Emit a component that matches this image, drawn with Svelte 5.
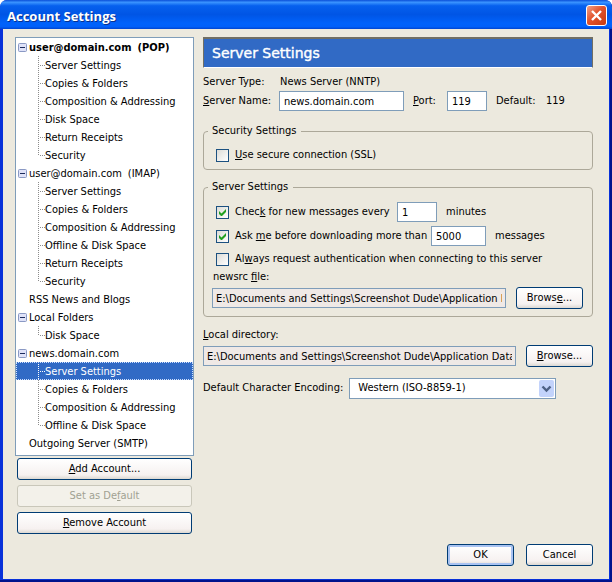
<script>
	const common = ['Copies & Folders', 'Composition & Addressing'];

	const accounts = [
		{
			name: 'user@domain.com',
			type: '(POP)',
			isDefault: true,
			pages: ['Server Settings', ...common, 'Disk Space', 'Return Receipts', 'Security']
		},
		{
			name: 'user@domain.com',
			type: '(IMAP)',
			pages: ['Server Settings', ...common, 'Offline & Disk Space', 'Return Receipts', 'Security']
		},
		{ name: 'RSS News and Blogs', pages: [] },
		{ name: 'Local Folders', pages: ['Disk Space'] },
		{ name: 'news.domain.com', pages: ['Server Settings', ...common, 'Offline & Disk Space'] },
		{ name: 'Outgoing Server (SMTP)', pages: [] }
	];

	let selected = $state('4-0');
	let collapsed = $state({});

	let serverName = $state('news.domain.com');
	let port = $state('119');
	let useSsl = $state(false);
	let checkNew = $state(true);
	let checkMinutes = $state('1');
	let askBefore = $state(true);
	let maxMessages = $state('5000');
	let alwaysAuth = $state(false);
	let encoding = $state('Western (ISO-8859-1)');

	const newsrcFile = 'E:\\Documents and Settings\\Screenshot Dude\\Application Data\\Thunderbird';
	const localDirectory = 'E:\\Documents and Settings\\Screenshot Dude\\Application Data\\Thunderbird';
</script>

{#snippet tick(on)}
	<svg class="tick" class:on viewBox="0 0 13 13" aria-hidden="true">
		<path d="M3 5v3l2 2h1l4-4V3L5.500 7.500z" fill="#21a121" />
	</svg>
{/snippet}

<div class="window">
	<header class="titlebar">
		<h1>Account Settings</h1>
		<button class="close" aria-label="Close">
			<svg viewBox="0 0 19 19" aria-hidden="true">
				<path d="M5 5l9 9M14 5l-9 9" stroke="#fff" stroke-width="2.4" />
			</svg>
		</button>
	</header>

	<div class="body">
		<div class="columns">
			<aside>
				<ul class="tree">
					{#each accounts as account, i}
						<li>
							<div class="row">
								{#if account.pages.length}
									<button
										class="twisty"
										aria-label="Toggle {account.name}"
										onclick={() => (collapsed[i] = !collapsed[i])}
									>
										<svg viewBox="0 0 9 9" aria-hidden="true">
											<rect x="0.5" y="0.5" width="8" height="8" rx="1" fill="#dfe2f8" stroke="#8a99c4" />
											<path d={collapsed[i] ? 'M2 4.500h5M4.500 2v5' : 'M2 4.500h5'} stroke="#1b2a5c" />
										</svg>
									</button>
								{:else}
									<span class="twisty"></span>
								{/if}
								<button
									class="item"
									class:bold={account.isDefault}
									onclick={() => (selected = `${i}`)}
								>
									<span>{account.name}</span>
									{#if account.type}<span>{account.type}</span>{/if}
								</button>
							</div>
							{#if account.pages.length && !collapsed[i]}
								<ul>
									{#each account.pages as page, j}
										<li>
											<button
												class="page"
												class:selected={selected === `${i}-${j}`}
												onclick={() => (selected = `${i}-${j}`)}
											>
												<svg class="guide" viewBox="0 0 7 18" aria-hidden="true">
													<path
														d={j === account.pages.length - 1 ? 'M0.500 0v10' : 'M0.500 0v18'}
														stroke-dasharray="1 1"
													/>
													<path d="M2 9.500h5" stroke-dasharray="1 1" />
												</svg>
												<span class="page-name">{page}</span>
											</button>
										</li>
									{/each}
								</ul>
							{/if}
						</li>
					{/each}
				</ul>
				<div class="account-buttons">
					<button class="btn"><u>A</u>dd Account...</button>
					<button class="btn" disabled>Set as De<u>f</u>ault</button>
					<button class="btn"><u>R</u>emove Account</button>
				</div>
			</aside>

			<main>
				<h2>Server Settings</h2>

				<div class="info">
					<span class="name">Server Type:</span>
					<span>News Server (NNTP)</span>
				</div>
				<div class="line server">
					<label class="name" for="server-name"><u>S</u>erver Name:</label>
					<input id="server-name" class="text host" type="text" bind:value={serverName} />
					<label class="port-label" for="port"><u>P</u>ort:</label>
					<input id="port" class="text short" type="text" bind:value={port} />
					<span class="default-label">Default:</span>
					<span>119</span>
				</div>

				<fieldset class="security">
					<legend>Security Settings</legend>
					<div class="line">
						<label class="check">
							<span class="box"><input type="checkbox" bind:checked={useSsl} />{@render tick(useSsl)}</span>
							<span><u>U</u>se secure connection (SSL)</span>
						</label>
					</div>
				</fieldset>

				<fieldset class="server-settings">
					<legend>Server Settings</legend>
					<div class="line">
						<label class="check">
							<span class="box"><input type="checkbox" bind:checked={checkNew} />{@render tick(checkNew)}</span>
							<span class="minutes-label">Chec<u>k</u> for new messages every</span>
						</label>
						<input class="text short" type="text" aria-label="Minutes" bind:value={checkMinutes} />
						<span class="unit">minutes</span>
					</div>
					<div class="line">
						<label class="check">
							<span class="box"><input type="checkbox" bind:checked={askBefore} />{@render tick(askBefore)}</span>
							<span class="messages-label">Ask <u>m</u>e before downloading more than</span>
						</label>
						<input class="text medium" type="text" aria-label="Messages" bind:value={maxMessages} />
						<span class="unit">messages</span>
					</div>
					<div class="line auth">
						<label class="check">
							<span class="box"><input type="checkbox" bind:checked={alwaysAuth} />{@render tick(alwaysAuth)}</span>
							<span>Al<u>w</u>ays request authentication when connecting to this server</span>
						</label>
					</div>
					<label class="path-label" for="newsrc">newsrc <u>f</u>ile:</label>
					<div class="path">
						<input id="newsrc" class="text" type="text" readonly value={newsrcFile} />
						<button class="btn small">Brows<u>e</u>...</button>
					</div>
				</fieldset>

				<label class="dir-label" for="local-dir"><u>L</u>ocal directory:</label>
				<div class="path">
					<input id="local-dir" class="text" type="text" readonly value={localDirectory} />
					<button class="btn small"><u>B</u>rowse...</button>
				</div>

				<div class="line encoding">
					<label for="encoding">Default Character Encoding:</label>
					<div class="select">
						<select id="encoding" bind:value={encoding}>
							<option>Western (ISO-8859-1)</option>
							<option>Unicode (UTF-8)</option>
						</select>
						<svg class="arrow" viewBox="0 0 15 17" aria-hidden="true">
							<rect width="15" height="17" rx="2" fill="#c3d3fb" />
							<path d="M3.500 6.500l4 4 4-4" fill="none" stroke="#4d6185" stroke-width="2.4" />
						</svg>
					</div>
				</div>
			</main>
		</div>

		<footer>
			<button class="btn small primary">OK</button>
			<button class="btn small">Cancel</button>
		</footer>
	</div>
</div>

<style>
	:global(body) {
		background: #fff;
	}

	.window,
	button,
	input,
	select {
		font-family: 'DejaVu Sans Condensed', 'DejaVu Sans', sans-serif;
		font-size: 11px;
		line-height: 14px;
		color: #000;
	}

	.window {
		box-sizing: border-box;
		min-height: 100vh;
		display: flex;
		flex-direction: column;
		background: #0831d9;
		box-shadow: inset -2px -2px 0 #00138c;
		border-radius: 7px 7px 0 0;
		overflow: hidden;
		white-space: nowrap;
	}

	ul {
		list-style: none;
		margin: 0;
		padding: 0;
	}

	button {
		margin: 0;
		padding: 0;
		border: none;
		background: none;
	}

	.titlebar {
		display: flex;
		align-items: center;
		justify-content: space-between;
		height: 29px;
		padding: 0 5px 0 7px;
		background: linear-gradient(#0a4fd8, #3a93ff 8%, #0660ee 20%, #0055e5 50%, #0062fb 80%, #0060fa 92%, #0045d0);
	}

	h1 {
		margin: 3px 0 0;
		font-family: 'Open Sans', 'Noto Sans', sans-serif;
		font-size: 13px;
		line-height: 18px;
		font-weight: bold;
		color: #fff;
		text-shadow: 1px 1px 0 #0a318c;
	}

	.close {
		box-sizing: border-box;
		width: 21px;
		height: 21px;
		margin-top: 2px;
		border: 1px solid #fff;
		border-radius: 3px;
		background: linear-gradient(135deg, #f0a088, #e2532c 45%, #c73a10);
	}

	.close svg {
		display: block;
	}

	.body {
		flex: 1;
		display: flex;
		flex-direction: column;
		justify-content: space-between;
		margin: 0 3px 3px;
		padding: 8px 16px 13px 12px;
		background: #ece9d8;
		background: #ece9de;
	}

	.columns {
		display: flex;
		gap: 9px;
	}

	aside {
		flex: 0 0 179px;
	}

	.tree {
		border: 1px solid #7f9db9;
		padding-bottom: 3px;
		background: #fff;
	}

	.row {
		display: flex;
		align-items: center;
		height: 18px;
		padding-left: 2px;
	}

	.twisty {
		width: 9px;
		height: 9px;
		margin-right: 2px;
	}

	.twisty svg {
		display: block;
	}

	.item {
		display: flex;
		gap: 6px;
		padding-top: 2px;
	}

	.bold {
		font-weight: bold;
	}

	.page {
		box-sizing: border-box;
		display: flex;
		align-items: center;
		width: 100%;
		height: 18px;
		padding-left: 22px;
	}

	.page-name {
		padding-top: 2px;
	}

	.guide {
		width: 7px;
		height: 18px;
		stroke: #8c8c8c;
	}

	.selected {
		background: #316ac5;
		color: #fff;
		outline: 1px dotted #cfe0ff;
		outline-offset: -1px;
	}

	.selected .guide {
		stroke: #fff;
	}

	.account-buttons {
		display: flex;
		flex-direction: column;
		gap: 5px;
		padding: 2px 2px 0;
	}

	.btn {
		box-sizing: border-box;
		height: 22px;
		border: 1px solid #003c74;
		border-radius: 3px;
		background: linear-gradient(#fff, #f6f1f0 80%, #dcd8d2);
	}

	.btn:disabled {
		border-color: #c9c7ba;
		background: #f3f1ea;
		color: #a1a192;
	}

	.small {
		flex: 0 0 67px;
	}

	.primary {
		box-shadow: inset 0 0 0 2px #a9c3f2;
	}

	main {
		flex: 1;
		min-width: 0;
	}

	h2 {
		margin: 0 0 7px;
		padding: 4px 8px;
		border: 1px solid;
		border-color: #716f64 #716f64 #fff;
		border-top-width: 2px;
		background: #316ac5;
		color: #fff;
		font-family: 'DejaVu Sans', sans-serif;
		font-size: 14px;
		line-height: 20px;
		font-weight: normal;
		-webkit-text-stroke: 0.4px #fff;
	}

	.info {
		display: flex;
		margin-bottom: 2px;
	}

	.name {
		width: 76px;
	}

	.info .name {
		width: 77px;
	}

	.line {
		display: flex;
		align-items: center;
		height: 20px;
	}

	.text {
		box-sizing: border-box;
		height: 20px;
		border: 1px solid #7f9db9;
		padding: 0 4px;
		background: #fff;
	}

	.text:read-only {
		padding: 0 3px;
		background: #efe9e6;
	}

	.host {
		width: 125px;
	}

	.short {
		width: 40px;
	}

	.medium {
		width: 55px;
	}

	.port-label {
		width: 34px;
		margin-left: 9px;
	}

	.default-label {
		width: 50px;
		margin-left: 9px;
	}

	fieldset {
		min-width: 0;
		margin: 0;
		border: 1px solid #aca899;
		border-radius: 4px;
	}

	legend {
		padding: 0 5px 0 4px;
	}

	.security {
		margin: 13px 0 10px;
		padding: 7px 12px 4px;
	}

	.security legend {
		margin-left: -8px;
	}

	.server-settings {
		margin-bottom: 11px;
		padding: 8px 9px 7px 8px;
	}

	.server-settings legend {
		margin-left: -4px;
	}

	.server-settings .line {
		margin: 0 0 4px 4px;
	}

	.server-settings .auth {
		height: 18px;
		margin-bottom: 2px;
	}

	.check {
		display: flex;
		align-items: center;
		gap: 6px;
	}

	.box {
		display: grid;
		width: 13px;
		height: 13px;
	}

	.box input {
		grid-area: 1 / 1;
		appearance: none;
		box-sizing: border-box;
		width: 13px;
		height: 13px;
		margin: 0;
		border: 1px solid #1c5180;
		background: linear-gradient(135deg, #dcdcd7, #fff);
	}

	.tick {
		grid-area: 1 / 1;
		width: 13px;
		height: 13px;
		visibility: hidden;
		pointer-events: none;
		z-index: 1;
	}

	.tick.on {
		visibility: visible;
	}

	.minutes-label {
		width: 162px;
	}

	.messages-label {
		width: 196px;
	}

	.unit {
		margin-left: 9px;
	}

	.path-label {
		display: block;
		margin: 0 0 3px 1px;
	}

	.path {
		display: flex;
		align-items: center;
		gap: 10px;
	}

	.path .text {
		flex: 1;
		min-width: 0;
	}

	.dir-label {
		display: block;
		margin-bottom: 3px;
	}

	.encoding {
		gap: 6px;
		margin-top: 11px;
	}

	.select {
		position: relative;
		width: 207px;
	}

	select {
		display: block;
		box-sizing: border-box;
		appearance: none;
		width: 100%;
		height: 21px;
		padding: 0 20px 0 8px;
		border: 1px solid #7f9db9;
		border-radius: 0;
		background: #fff;
	}

	.arrow {
		position: absolute;
		top: 2px;
		right: 2px;
		width: 15px;
		height: 17px;
		pointer-events: none;
	}

	footer {
		display: flex;
		justify-content: flex-end;
		gap: 12px;
	}
</style>
